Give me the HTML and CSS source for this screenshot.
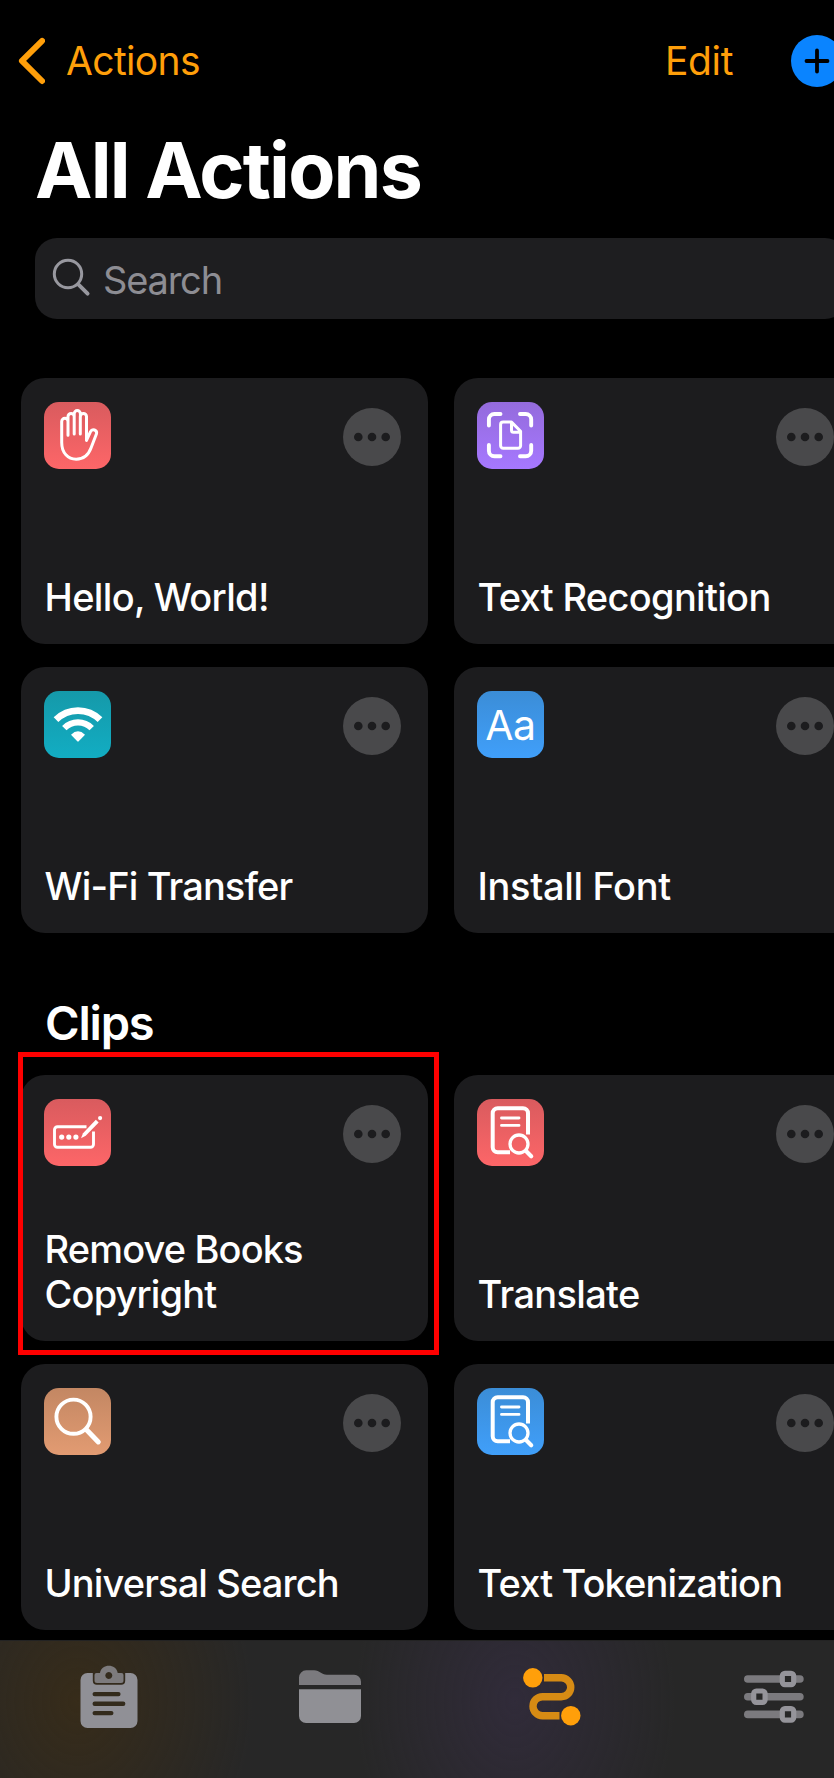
FILE: index.html
```html
<!DOCTYPE html>
<html lang="en">
<head>
<meta charset="utf-8">
<title>All Actions</title>
<link rel="stylesheet" href="styles.css">
</head>
<body>
<svg class="defs" width="0" height="0">
  <symbol id="more" viewBox="0 0 58 58">
    <circle cx="29" cy="29" r="29" fill="#49494b"/>
    <g fill="#1c1c1e"><circle cx="15.3" cy="29" r="4.3"/><circle cx="29" cy="29" r="4.3"/><circle cx="42.7" cy="29" r="4.3"/></g>
  </symbol>
  <symbol id="doc-search" viewBox="0 0 67 67">
    <g fill="none" stroke="#fff" stroke-linecap="round">
      <path stroke-width="4" stroke-linecap="butt" d="M51 35.600V14.200a5 5 0 0 0-5-5H20.700a5 5 0 0 0-5 5V48.200a5 5 0 0 0 5 5H33"/>
      <path stroke-width="2.900" d="M24.500 19H42M24.500 26.400H42"/>
      <circle cx="42" cy="45" r="9" stroke-width="3.300"/>
      <path stroke-width="4.200" d="M49.500 52.500L54.200 57.200"/>
    </g>
  </symbol>
</svg>

<div class="app">
  <header class="nav">
    <a class="back">
      <svg width="28" height="50" viewBox="0 0 28 50"><path d="M25.100 4.800L4.900 24.900L25.100 45" fill="none" stroke="#ff9f0a" stroke-width="5.900" stroke-linecap="round" stroke-linejoin="round"/></svg>
      <span class="back-label">Actions</span>
    </a>
    <a class="edit">Edit</a>
    <svg class="add" width="52" height="52" viewBox="0 0 52 52"><circle cx="26" cy="26" r="26" fill="#0a84ff"/><path d="M15.500 26h21M26 15.500v21" stroke="#000" stroke-width="3.800" stroke-linecap="round"/></svg>
  </header>

  <h1 class="title">All Actions</h1>

  <div class="search">
    <svg width="40" height="40" viewBox="0 0 40 40"><g fill="none" stroke="#98989f" stroke-linecap="round"><circle cx="16" cy="16" r="13.700" stroke-width="3"/><path stroke-width="3.900" d="M26.300 26.300L35.600 35.600"/></g></svg>
    <span class="search-text">Search</span>
  </div>

  <section class="grid first">
    <article class="card">
      <div class="card-top">
        <div class="icon red"><svg width="67" height="67" viewBox="0 0 67 67"><path fill="none" stroke="#fff" stroke-width="3" stroke-linecap="round" stroke-linejoin="round" d="M24 33.200V19.500a3.150 3.150 0 0 0-6.300 0V40.500C17.700 51 24 57.200 32.200 57.200c8.300 0 12.300-4.200 14.900-11.400l5.300-13.800c1.200-4.200-4.200-5.700-5.900-2.300L42.500 38.400V14.500a3.100 3.100 0 0 0-6.200 0V32M24 20V14.500a3.100 3.100 0 0 1 6.200 0V32M30.200 15V11.700a3.100 3.100 0 0 1 6.200 0V15"/></svg></div>
        <svg class="more" width="58" height="58"><use href="#more"/></svg>
      </div>
      <p class="label snug">Hello, World!</p>
    </article>
    <article class="card">
      <div class="card-top">
        <div class="icon purple"><svg width="67" height="67" viewBox="0 0 67 67"><g fill="none" stroke="#fff" stroke-linecap="round" stroke-linejoin="round"><path stroke-width="3.900" d="M11.900 23.500V17.500a5.500 5.500 0 0 1 5.500-5.500H23.500M43 12H48.700a5.500 5.500 0 0 1 5.500 5.500V23.500M54.200 43V48.800a5.500 5.500 0 0 1-5.500 5.500H43M23.500 54.300H17.400a5.500 5.500 0 0 1-5.500-5.500V43"/><path stroke-width="3" d="M34.500 20.100H26.200a2.600 2.600 0 0 0-2.600 2.600V43.700a2.600 2.600 0 0 0 2.600 2.600H41a2.600 2.600 0 0 0 2.600-2.600V29.200L34.500 20.100V28.200a2 2 0 0 0 2 2H43"/></g></svg></div>
        <svg class="more" width="58" height="58"><use href="#more"/></svg>
      </div>
      <p class="label snug">Text Recognition</p>
    </article>
    <article class="card">
      <div class="card-top">
        <div class="icon teal"><svg width="67" height="67" viewBox="0 0 67 67"><g fill="none" stroke="#fff"><path stroke-width="6.600" d="M12 28.700A31.100 31.100 0 0 1 56 28.700"/><path stroke-width="6.200" d="M20.300 37.100A19.300 19.300 0 0 1 47.700 37.100"/></g><path fill="#fff" d="M27 43.700Q34 37 41 43.700L34.700 50.300Q34 51 33.300 50.300Z"/></svg></div>
        <svg class="more" width="58" height="58"><use href="#more"/></svg>
      </div>
      <p class="label">Wi-Fi Transfer</p>
    </article>
    <article class="card">
      <div class="card-top">
        <div class="icon blue"><span class="aa">Aa</span></div>
        <svg class="more" width="58" height="58"><use href="#more"/></svg>
      </div>
      <p class="label loose">Install Font</p>
    </article>
  </section>

  <h2 class="heading">Clips</h2>

  <section class="grid">
    <article class="card marked">
      <div class="card-top">
        <div class="icon red"><svg width="67" height="67" viewBox="0 0 67 67"><path fill="none" stroke="#fff" stroke-width="2.900" d="M42.500 27.700H13.500a3 3 0 0 0-3 3V45.300a3 3 0 0 0 3 3H46.500a3 3 0 0 0 3-3V32.500"/><g fill="#fff"><circle cx="17.700" cy="38.100" r="2.600"/><circle cx="24.800" cy="38.100" r="2.600"/><circle cx="31.900" cy="38.100" r="2.600"/><path d="M37 39.200L39 34.200L51.800 20.700L54.700 23.600L41.700 36.800Z"/><circle cx="56.100" cy="19.100" r="2.100"/></g></svg></div>
        <svg class="more" width="58" height="58"><use href="#more"/></svg>
      </div>
      <p class="label">Remove Books<br>Copyright</p>
    </article>
    <article class="card">
      <div class="card-top">
        <div class="icon red"><svg width="67" height="67"><use href="#doc-search"/></svg></div>
        <svg class="more" width="58" height="58"><use href="#more"/></svg>
      </div>
      <p class="label snug">Translate</p>
    </article>
    <article class="card">
      <div class="card-top">
        <div class="icon tan"><svg width="67" height="67" viewBox="0 0 67 67"><g fill="none" stroke="#fff" stroke-linecap="round"><circle cx="29.500" cy="28.700" r="17.100" stroke-width="3.900"/><path stroke-width="5" d="M42.500 41.700L54.300 53.900"/></g></svg></div>
        <svg class="more" width="58" height="58"><use href="#more"/></svg>
      </div>
      <p class="label">Universal Search</p>
    </article>
    <article class="card">
      <div class="card-top">
        <div class="icon blue"><svg width="67" height="67"><use href="#doc-search"/></svg></div>
        <svg class="more" width="58" height="58"><use href="#more"/></svg>
      </div>
      <p class="label">Text Tokenization</p>
    </article>
  </section>

  <nav class="tabs">
    <a class="tab"><svg width="70" height="70" viewBox="0 0 70 70">
      <path fill="#909096" d="M13.500 12H18.800V19.700a4 4 0 0 0 4 4H47.200a4 4 0 0 0 4-4V12H56.500a7 7 0 0 1 7 7V60a7 7 0 0 1-7 7H13.500a7 7 0 0 1-7-7V19a7 7 0 0 1 7-7Z"/>
      <path fill="#7d7b7d" fill-rule="evenodd" d="M22.500 12H26C27.500 2.300 42.200 2.300 43.700 12H47.500a2 2 0 0 1 2 2V19.500a2.500 2.500 0 0 1-2.500 2.500H23a2.500 2.500 0 0 1-2.500-2.500V14a2 2 0 0 1 2-2ZM34.800 10.900a3.500 3.500 0 1 0 .01 0Z"/>
      <path stroke="#332b1c" stroke-width="4.400" stroke-linecap="round" d="M20.700 33.100H44.400M20.700 42.700H49.200M20.700 52.100H37.300"/></svg></a>
    <a class="tab"><svg width="70" height="70" viewBox="0 0 70 70">
      <path fill="#7b7a7e" d="M4 24V16.500a7.200 7.200 0 0 1 7.200-7.200H19C25 9.300 26 13.800 32 13.800H59a7 7 0 0 1 7 7V24Z"/>
      <path fill="#909095" d="M4 28.300H66V55a7 7 0 0 1-7 7H11a7 7 0 0 1-7-7Z"/></svg></a>
    <a class="tab"><svg width="70" height="70" viewBox="0 0 70 70">
      <path fill="none" stroke="#d68b14" stroke-width="7.400" d="M27 16.800H44.300a9.450 9.450 0 0 1 0 18.900H25.500a9.500 9.500 0 0 0 0 19H42.500"/>
      <circle cx="15.800" cy="16.800" r="9.700" fill="#ff9f0a"/><circle cx="53.800" cy="54.700" r="9.700" fill="#ff9f0a"/></svg></a>
    <a class="tab"><svg width="70" height="70" viewBox="0 0 70 70">
      <path stroke="#7b7a7e" stroke-width="7.600" stroke-linecap="round" d="M8.800 18H60.900M8.800 35.700H60.900M8.800 53.400H60.900"/>
      <g fill="#272727" stroke="#95949a" stroke-width="5.200"><rect x="43.300" y="12.300" width="11.400" height="11.400" rx="2.600"/><rect x="14.700" y="30" width="11.400" height="11.400" rx="2.600"/><rect x="43.300" y="47.700" width="11.400" height="11.400" rx="2.600"/></g></svg></a>
  </nav>
</div>
</body>
</html>
```
FILE: styles.css
```css
* { box-sizing: border-box; }
html, body { margin: 0; background: #000; overflow: hidden; }
body { width: 834px; height: 1778px; font-family: Inter, "Liberation Sans", sans-serif; color: #fff; }
h1, h2, p { margin: 0; }
svg { display: block; flex: none; }
.defs { position: absolute; }
.app { width: 882px; height: 1778px; display: flex; flex-direction: column; }

.nav { height: 121px; padding: 0 39px 0 17px; display: flex; align-items: center; font-size: 39px; line-height: 48px; color: #ff9f0a; }
.back { display: flex; align-items: center; }
.back-label { margin-left: 21px; letter-spacing: -0.65px; }
.edit { margin-left: auto; letter-spacing: -0.4px; }
.add { margin-left: 58px; }

.title { height: 117px; padding-left: 35px; font-size: 77px; line-height: 98px; font-weight: 700; letter-spacing: -1.8px; }

.search { width: 812px; height: 81px; margin-left: 35px; padding-left: 17px; border-radius: 22px; background: #1e1e20; display: flex; align-items: center; gap: 11px; font-size: 38px; color: #8d8d93; }
.search svg { margin-top: -2px; }
.search-text { line-height: 46px; padding-top: 2px; letter-spacing: -1.2px; }

.grid { display: grid; grid-template-columns: 407px 407px; grid-auto-rows: 265.500px; column-gap: 26px; row-gap: 23.500px; padding-left: 21px; }
.first { margin-top: 59px; }
.card { padding: 24px 27px 24px 23px; border-radius: 24px; background: #1c1c1e; display: flex; flex-direction: column; justify-content: space-between; }
.card-top { display: flex; justify-content: space-between; align-items: center; }
.icon { width: 67px; height: 67px; border-radius: 15px; display: flex; align-items: center; justify-content: center; }
.more { margin-top: 2px; }
.red { background: linear-gradient(#d95b5e, #fd6668); }
.purple { background: linear-gradient(#946bdc, #a678ff); }
.teal { background: linear-gradient(#1599a9, #12adc3); }
.blue { background: linear-gradient(#3b8dd7, #409ffa); }
.tan { background: linear-gradient(#c38763, #e29b72); }
.aa { font-size: 41px; line-height: 50px; letter-spacing: -0.4px; }
.label { padding-left: 0.6px; font-size: 38px; line-height: 45px; font-weight: 500; letter-spacing: -0.87px; white-space: nowrap; }
.snug { letter-spacing: -0.68px; }
.loose { letter-spacing: -0.35px; }

.heading { height: 142.500px; padding: 62px 0 0 45px; font-size: 47px; line-height: 56px; font-weight: 600; letter-spacing: -1.2px; }

/* Highlight frame around the chosen action */
.marked { position: relative; }
.marked::after { content: ""; box-sizing: border-box; position: absolute; left: -3px; top: -23px; width: 421px; height: 303px; border: 5px solid #fe0000; }

.tabs { height: 138px; margin-top: auto; padding: 20px 0 0; display: grid; grid-template-columns: repeat(4, 221.800px); justify-items: center; margin-left: -2.400px; border-top: 1px solid #232323;
  background:
    radial-gradient(ellipse 175px 210px at 80px 60px, rgba(70, 48, 12, .5), rgba(70, 48, 12, .25) 50%, rgba(70, 48, 12, 0)),
    radial-gradient(ellipse 160px 210px at 517px 60px, rgba(60, 48, 80, .45), rgba(60, 48, 80, .22) 50%, rgba(60, 48, 80, 0)),
    #272727; }
```
